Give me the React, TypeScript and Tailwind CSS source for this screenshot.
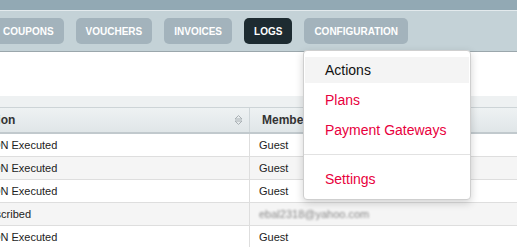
import React from "react";

const tabs = [
  { label: "COUPONS", active: false },
  { label: "VOUCHERS", active: false },
  { label: "INVOICES", active: false },
  { label: "LOGS", active: true },
  { label: "CONFIGURATION", active: false },
];

const rows: { action: string; member: string; blur?: boolean }[] = [
  { action: "CRON Executed", member: "Guest" },
  { action: "CRON Executed", member: "Guest" },
  { action: "CRON Executed", member: "Guest" },
  { action: "Subscribed", member: "ebal2318@yahoo.com", blur: true },
  { action: "CRON Executed", member: "Guest" },
];

function SortIcon() {
  return (
    <svg width="9" height="12" viewBox="0 0 9 12" fill="none" stroke="#a9b0b4" strokeWidth="1">
      <path d="M1 5 L4.5 1.5 L8 5 Z" />
      <path d="M1 7 L4.5 10.5 L8 7 Z" />
    </svg>
  );
}

export default function App() {
  return (
    <div
      className="relative w-[517px] h-[247px] overflow-hidden bg-white"
      style={{ fontFamily: '"Liberation Sans", Arial, Helvetica, sans-serif' }}
    >
      <div className="h-[10px] bg-[#92a9b4]" />
      <div className="h-[42px] border-t border-b border-t-[#e3eaed] border-b-[#9ba7ac] bg-[#c4d2d7] flex items-center gap-[12px] -ml-[7px] shadow-[0_1px_1px_rgba(0,0,0,0.06)]">
        {tabs.map((t) => (
          <div
            key={t.label}
            className={`h-[26px] px-[10px] rounded-[5px] flex items-center text-[10px] font-bold text-white whitespace-nowrap ${
              t.active ? "bg-[#1d2b31]" : "bg-[#a3b3bc]"
            }`}
          >
            {t.label}
          </div>
        ))}
      </div>
      <div className="h-[44px] bg-white" />
      <div className="h-[11px] bg-[#eef1f2]" />
      <div className="-ml-[34px] w-[551px]">
        <div className="flex h-[27px] border-t border-b-2 border-t-[#cdd4d7] border-b-[#c1c9cd] bg-gradient-to-b from-[#eef2f3] to-[#e0e6e8] text-[12px] font-bold text-[#333]">
          <div className="w-[284px] flex items-center justify-between pl-[12px] pr-[6px] border-r border-[#cfd6d9]">
            <span>Action</span>
            <SortIcon />
          </div>
          <div className="flex-1 flex items-center pl-[12px]">Member</div>
        </div>
        {rows.map((r, i) => (
          <div
            key={i}
            className={`flex h-[23px] border-b border-[#dedede] text-[11px] text-[#222] ${
              i % 2 === 1 ? "bg-[#f5f5f5]" : "bg-white"
            }`}
          >
            <div className="w-[284px] flex items-center pl-[10px] border-r border-[#dedede]">{r.action}</div>
            <div className="flex-1 flex items-center pl-[9px]">
              {r.blur ? <span className="text-[11px] text-[#888] blur-[1.2px]">{r.member}</span> : r.member}
            </div>
          </div>
        ))}
      </div>

      <div className="absolute left-[303px] top-[50px] w-[168px] h-[150px] bg-white border border-[#cfcfcf] rounded-[4px] shadow-[0_3px_8px_rgba(0,0,0,0.18)] pt-[6px] px-[1px] text-[14px]">
        <div className="flex flex-col gap-[4px]">
          <div className="h-[26px] flex items-center pl-[20px] bg-[#f4f4f4] text-[#111]">Actions</div>
          <div className="h-[26px] flex items-center pl-[20px] text-[#e8003d]">Plans</div>
          <div className="h-[26px] flex items-center pl-[20px] text-[#e8003d]">Payment Gateways</div>
        </div>
        <div className="-mx-[1px] my-[11px] h-px bg-[#e2e2e2]" />
        <div className="h-[26px] flex items-center pl-[20px] text-[#e8003d]">Settings</div>
      </div>
    </div>
  );
}
